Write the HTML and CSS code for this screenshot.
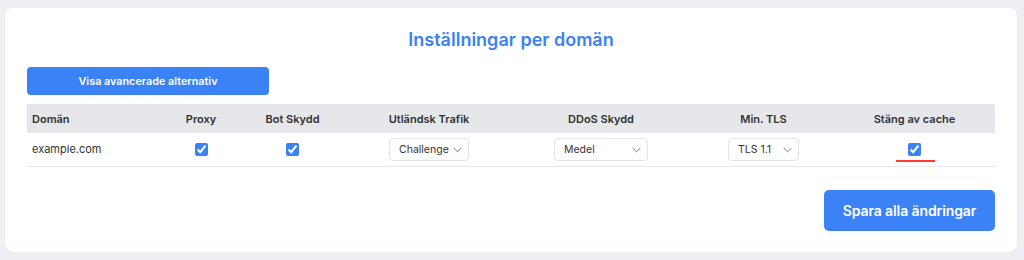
FILE: index.html
```html
<!DOCTYPE html>
<html lang="sv">
<head>
<meta charset="utf-8">
<title>Inställningar per domän</title>
<link rel="stylesheet" href="styles.css">
</head>
<body>
<div class="page">
  <section class="card">
    <h2 class="title">Inställningar per domän</h2>
    <div class="toolbar">
      <button class="btn btn-adv" type="button">Visa avancerade alternativ</button>
    </div>
    <table class="domains">
      <colgroup>
        <col class="c-domain"><col class="c-proxy"><col class="c-bot"><col class="c-foreign"><col class="c-ddos"><col class="c-tls"><col class="c-cache">
      </colgroup>
      <thead>
        <tr>
          <th class="left">Domän</th>
          <th>Proxy</th>
          <th>Bot Skydd</th>
          <th>Utländsk Trafik</th>
          <th>DDoS Skydd</th>
          <th>Min. TLS</th>
          <th>Stäng av cache</th>
        </tr>
      </thead>
      <tbody>
        <tr>
          <td class="left">example.com</td>
          <td><input class="chk" type="checkbox" checked></td>
          <td><input class="chk" type="checkbox" checked></td>
          <td>
            <span class="sel sel-foreign">
              <select><option>Challenge</option><option>Tillåt</option><option>Blockera</option></select>
              <svg class="chev" viewBox="0 0 10 6" width="9" height="6"><path d="M1 1l4 4 4-4" fill="none" stroke="#777" stroke-width="1.1" stroke-linecap="round" stroke-linejoin="round"/></svg>
            </span>
          </td>
          <td>
            <span class="sel sel-ddos">
              <select><option>Medel</option><option>Låg</option><option>Hög</option></select>
              <svg class="chev" viewBox="0 0 10 6" width="9" height="6"><path d="M1 1l4 4 4-4" fill="none" stroke="#777" stroke-width="1.1" stroke-linecap="round" stroke-linejoin="round"/></svg>
            </span>
          </td>
          <td>
            <span class="sel sel-tls">
              <select><option>TLS 1.1</option><option>TLS 1.2</option><option>TLS 1.3</option></select>
              <svg class="chev" viewBox="0 0 10 6" width="9" height="6"><path d="M1 1l4 4 4-4" fill="none" stroke="#777" stroke-width="1.1" stroke-linecap="round" stroke-linejoin="round"/></svg>
            </span>
          </td>
          <td><span class="marked"><input class="chk" type="checkbox" checked></span></td>
        </tr>
      </tbody>
    </table>
    <div class="actions">
      <button class="btn btn-save" type="button">Spara alla ändringar</button>
    </div>
  </section>
</div>
</body>
</html>
```

FILE: styles.css
```css
* { box-sizing: border-box; }

html, body {
  margin: 0;
  padding: 0;
  background: #eeeff3;
  font-family: Inter, "Noto Sans", "Liberation Sans", sans-serif;
  color: #333;
}

.page {
  padding: 8px 7px 0 5px;
}

.card {
  background: #fff;
  border-radius: 8px;
  box-shadow: 0 1px 2px rgba(0, 0, 0, 0.06);
  padding: 18px 22px 22px 22px;
  height: 244px;
}

.title {
  margin: 0;
  text-align: center;
  font-size: 18px;
  line-height: 28px;
  font-weight: 600;
  color: #3b82f6;
}

.toolbar {
  margin-top: 13px;
  display: flex;
}

.btn {
  font-family: inherit;
  border: none;
  background: #3b82f6;
  color: #fff;
  cursor: pointer;
}

.btn-adv {
  width: 242px;
  height: 28px;
  border-radius: 4px;
  font-size: 10.8px;
  font-weight: 600;
}

.domains {
  margin-top: 9px;
  width: 968px;
  border-collapse: collapse;
  table-layout: fixed;
}

.c-domain { width: 139px; }
.c-proxy { width: 70px; }
.c-bot { width: 113px; }
.c-foreign { width: 160px; }
.c-ddos { width: 184px; }
.c-tls { width: 141px; }
.c-cache { width: 161px; }

.domains thead tr {
  background: #e5e7eb;
}

.domains th {
  height: 29px;
  padding: 0 5px;
  font-size: 11px;
  font-weight: 600;
  color: #333;
  text-align: center;
}

.domains td {
  height: 33px;
  padding: 0 5px;
  font-size: 11px;
  text-align: center;
  border-bottom: 1px solid #e5e7eb;
  vertical-align: middle;
}

.domains .left {
  text-align: left;
}

.chk {
  margin: 0;
  width: 13px;
  height: 13px;
  accent-color: #3b82f6;
  vertical-align: middle;
  position: relative;
  top: -1px;
}

.sel {
  position: relative;
  display: inline-flex;
  vertical-align: middle;
}

.sel select {
  appearance: none;
  -webkit-appearance: none;
  height: 23px;
  border: 1px solid #e3e4e8;
  border-radius: 4px;
  background: #fff;
  font-family: inherit;
  font-size: 10.5px;
  color: #333;
  padding: 0 0 0 9px;
}

.sel-foreign select { width: 80px; }
.sel-ddos select { width: 94px; }
.sel-tls select { width: 71px; }

.chev {
  position: absolute;
  right: 7px;
  top: 9px;
  pointer-events: none;
}

.marked {
  position: relative;
  display: inline-block;
  line-height: 0;
}

.marked::after {
  content: "";
  position: absolute;
  left: -12px;
  width: 39px;
  top: 16px;
  height: 2px;
  background: #ff3b30;
}

.actions {
  margin-top: 23px;
  display: flex;
  justify-content: flex-end;
}

.btn-save {
  width: 171px;
  height: 41px;
  border-radius: 5px;
  font-size: 14px;
  font-weight: 600;
  letter-spacing: -0.1px;
}
```
